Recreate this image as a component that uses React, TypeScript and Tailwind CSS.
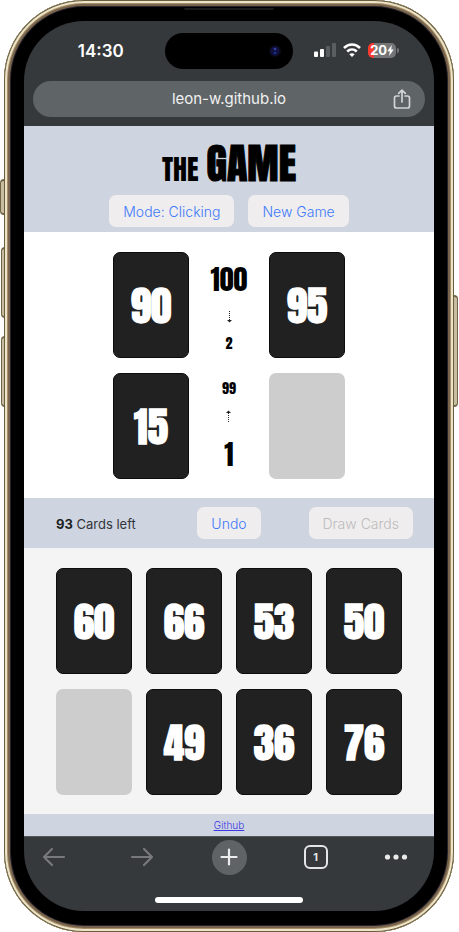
import type { ReactNode } from "react";

const CARD_FONT = "font-['Anton','Roboto',sans-serif]";

function Card({ value }: { value?: number }) {
  if (value === undefined) {
    return <div className="h-[106px] w-[76px] rounded-[7px] bg-[#cdcdcd]" />;
  }
  return (
    <button
      type="button"
      className={`flex h-[106px] w-[76px] items-center justify-center rounded-[7px] border border-[#0c0c0c] bg-[#212121] pt-px text-[41px] leading-[60px] font-bold text-white ${CARD_FONT}`}
    >
      {value}
    </button>
  );
}

function Action({ children, disabled = false }: { children: ReactNode; disabled?: boolean }) {
  return (
    <button
      type="button"
      disabled={disabled}
      className="h-8 rounded-[7px] bg-[#efedee] px-3.5 pt-px text-[14px] leading-5 font-light whitespace-nowrap text-[#3d7afb] disabled:text-[#bdbcbd]"
    >
      {children}
    </button>
  );
}

function DottedArrow({ up = false }: { up?: boolean }) {
  return (
    <svg width="8" height="12" viewBox="0 0 8 12" className={up ? "rotate-180" : ""} aria-hidden="true">
      <path d="M4.500 0v10" stroke="#222" strokeWidth="1" strokeDasharray="1 1" />
      <path d="M2 9h5L4.500 11.600z" fill="#222" />
    </svg>
  );
}

function StatusBar() {
  return (
    <div className="grid h-[60px] grid-cols-3 items-center px-[9px]">
      <span className="pl-[5px] text-center text-[17px] leading-6 font-semibold text-white">14:30</span>
      <div className="flex h-[36px] w-[128px] items-center justify-end justify-self-center rounded-full bg-black pr-3">
        <svg width="12" height="12" viewBox="0 0 12 12" aria-hidden="true">
          <circle cx="6" cy="6" r="6" fill="#0a0814" />
          <circle cx="6" cy="6" r="4.5" fill="#101043" />
          <circle cx="6" cy="4" r="1.3" fill="#3340a0" />
          <circle cx="6" cy="8" r="1.3" fill="#1c2f80" />
        </svg>
      </div>
      <div className="flex items-center justify-center gap-[7px] pr-1.5 pb-0.5">
        <svg width="22" height="14" viewBox="0 0 22 14" aria-hidden="true">
          <rect x="0" y="8.5" width="4" height="5.5" rx="1" fill="#fff" />
          <rect x="6" y="6" width="4" height="8" rx="1" fill="#fff" />
          <rect x="12" y="3" width="4" height="11" rx="1" fill="#5b5e60" />
          <rect x="18" y="0" width="4" height="14" rx="1" fill="#5b5e60" />
        </svg>
        <svg width="18" height="14" viewBox="0 0 18 14" fill="none" stroke="#fff" strokeWidth="2.6" aria-hidden="true">
          <path d="M1 5C5.6.4 12.4.4 17 5" />
          <path d="M4.2 8.500c2.800-2.700 6.800-2.700 9.600 0" />
          <path d="M9 14 6.300 11.300c1.500-1.400 3.900-1.400 5.400 0z" fill="#fff" stroke="none" />
        </svg>
        <div className="flex items-center gap-px">
          <div className="flex h-[15px] w-[28px] items-center justify-center rounded-[5px] bg-[linear-gradient(90deg,#fb3b30_20%,#737577_20%)] text-[13px] leading-none font-bold text-white">
            20
            <svg width="7" height="11" viewBox="0 0 7 11" aria-hidden="true">
              <path d="M4.800 0 .3 6.200h2.500L2.200 11l4.500-6.400H4.200z" fill="#fff" />
            </svg>
          </div>
          <div className="h-[5px] w-[2px] rounded-r-full bg-[#737577]" />
        </div>
      </div>
    </div>
  );
}

function AddressBar() {
  return (
    <div className="mx-[9px] mb-[9px] flex h-[36px] items-center rounded-full bg-[#5f6467] pr-[14px] pl-8 text-[#f1f1f1]">
      <span className="flex-1 text-center text-[15px] leading-6">leon-w.github.io</span>
      <button type="button" aria-label="Share">
        <svg width="18" height="20" viewBox="0 0 18 20" fill="none" stroke="#d2d4d5" strokeWidth="1.700" strokeLinecap="round" strokeLinejoin="round" aria-hidden="true">
          <path d="M6 7H3.500A2 2 0 0 0 1.500 9v8a2 2 0 0 0 2 2h11a2 2 0 0 0 2-2V9a2 2 0 0 0-2-2H12" />
          <path d="M9 13V1.200M5.700 4.400 9 1.200l3.300 3.200" />
        </svg>
      </button>
    </div>
  );
}

function Toolbar() {
  return (
    <nav className="h-[75px] border-t border-[#55585b]">
      <div className="grid h-[40px] grid-cols-[1fr_35px_1fr] items-center">
        <div className="flex items-center justify-between pr-[58px] pl-[18px]">
          <button type="button" aria-label="Back">
            <svg width="24" height="20" viewBox="0 0 24 20" fill="none" stroke="#77797b" strokeWidth="2.200" strokeLinecap="round" strokeLinejoin="round" aria-hidden="true">
              <path d="M22 10H2M10 2 2 10l8 8" />
            </svg>
          </button>
          <button type="button" aria-label="Forward">
            <svg width="24" height="20" viewBox="0 0 24 20" fill="none" stroke="#77797b" strokeWidth="2.200" strokeLinecap="round" strokeLinejoin="round" aria-hidden="true">
              <path d="M2 10h20M14 2l8 8-8 8" />
            </svg>
          </button>
        </div>
        <button type="button" aria-label="New tab" className="flex size-[35px] items-center justify-center rounded-full bg-[#5f6366]">
          <svg width="18" height="18" viewBox="0 0 18 18" stroke="#eceded" strokeWidth="2.200" strokeLinecap="round" aria-hidden="true">
            <path d="M9 1.500v15M1.500 9h15" />
          </svg>
        </button>
        <div className="flex items-center justify-between pr-[26px] pl-[57px]">
          <button type="button" aria-label="Tabs" className="flex size-6 items-center justify-center rounded-[6px] border-2 border-[#e3e5e6] text-[11px] leading-none font-bold text-[#e3e5e6]">
            1
          </button>
          <button type="button" aria-label="More">
            <svg width="24" height="6" viewBox="0 0 24 6" fill="#e9eaea" aria-hidden="true">
              <circle cx="3.500" cy="3" r="2.600" />
              <circle cx="12" cy="3" r="2.600" />
              <circle cx="20.500" cy="3" r="2.600" />
            </svg>
          </button>
        </div>
      </div>
      <div className="mx-auto mt-[20px] h-[6px] w-[148px] rounded-full bg-white" />
    </nav>
  );
}

const SIDE = "absolute border-y-2 border-[#6e6545] bg-[#c6bda3]";

export default function App() {
  return (
    <div className="relative bg-white pr-[5px] pl-1 font-['Inter',sans-serif]">
      <div className={`${SIDE} top-[179px] left-0 h-[36px] w-[5px] rounded-l-sm border-l`} />
      <div className={`${SIDE} top-[247px] left-px h-[71px] w-1 rounded-l-sm border-l`} />
      <div className={`${SIDE} top-[336px] left-px h-[71px] w-1 rounded-l-sm border-l`} />
      <div className={`${SIDE} top-[295px] right-px h-[112px] w-[5px] rounded-r-sm border-r`} />
      <div className="relative rounded-[80px] bg-black px-5 py-[21px] shadow-[inset_0_0_0_1px_#6b5d3b,inset_0_0_0_3px_#ede5c9,inset_0_0_0_4px_#a58e68,inset_0_0_0_6px_#78644c,inset_0_0_0_7px_#24212a]">
        <div className="absolute top-2 left-1/2 h-0.5 w-[90px] -translate-x-1/2 rounded-b bg-[#1b1b1b]" />
        <div className="overflow-hidden rounded-[60px] bg-[#35393c]">
          <StatusBar />
          <AddressBar />
          <header className="flex h-[106px] flex-col items-center bg-[#ced4e0] pt-[14px]">
            <h1 className={`flex h-[47px] items-baseline gap-2 leading-[47px] text-black ${CARD_FONT}`}>
              <span className="text-[28px]">THE</span>
              <span className="text-[42px] [-webkit-text-stroke:1px_black]">GAME</span>
            </h1>
            <div className="mt-2 flex gap-[14px]">
              <Action>Mode: Clicking</Action>
              <Action>New Game</Action>
            </div>
          </header>
          <main>
            <section className="flex flex-col items-center gap-[15px] bg-white pt-5 pb-[19px]">
              <div className="flex">
                <Card value={90} />
                <div className={`flex w-20 flex-col items-center pt-2 text-black ${CARD_FONT}`}>
                  <span className="text-[28px] leading-[38px]">100</span>
                  <div className="flex h-[38px] items-center"><DottedArrow /></div>
                  <span className="text-[14px] leading-4">2</span>
                </div>
                <Card value={95} />
              </div>
              <div className="flex">
                <Card value={15} />
                <div className={`flex w-20 flex-col items-center pt-2 text-black ${CARD_FONT}`}>
                  <span className="text-[14px] leading-4">99</span>
                  <div className="flex h-[38px] items-center"><DottedArrow up /></div>
                  <span className="text-[28px] leading-[38px]">1</span>
                </div>
                <Card />
              </div>
            </section>
            <section className="grid h-[50px] grid-cols-[1fr_auto_1fr] items-center bg-[#ced4e0] px-[21px]">
              <p className="pt-px pl-[11px] text-[13px] leading-5 text-[#33363c]">
                <b className="font-bold text-[#1c1e22]">93</b> Cards left
              </p>
              <Action>Undo</Action>
              <div className="flex justify-end">
                <Action disabled>Draw Cards</Action>
              </div>
            </section>
            <section className="flex justify-center bg-[#f4f4f4] pt-5 pb-[19px]">
              <div className="grid grid-cols-4 gap-x-[14px] gap-y-[15px]">
                <Card value={60} />
                <Card value={66} />
                <Card value={53} />
                <Card value={50} />
                <Card />
                <Card value={49} />
                <Card value={36} />
                <Card value={76} />
              </div>
            </section>
          </main>
          <footer className="flex h-[22px] items-center justify-center bg-[#ced4e0]">
            <a href="https://github.com" className="text-[10px] leading-4 font-light text-[#3a35e6] underline">
              Github
            </a>
          </footer>
          <Toolbar />
        </div>
      </div>
    </div>
  );
}
